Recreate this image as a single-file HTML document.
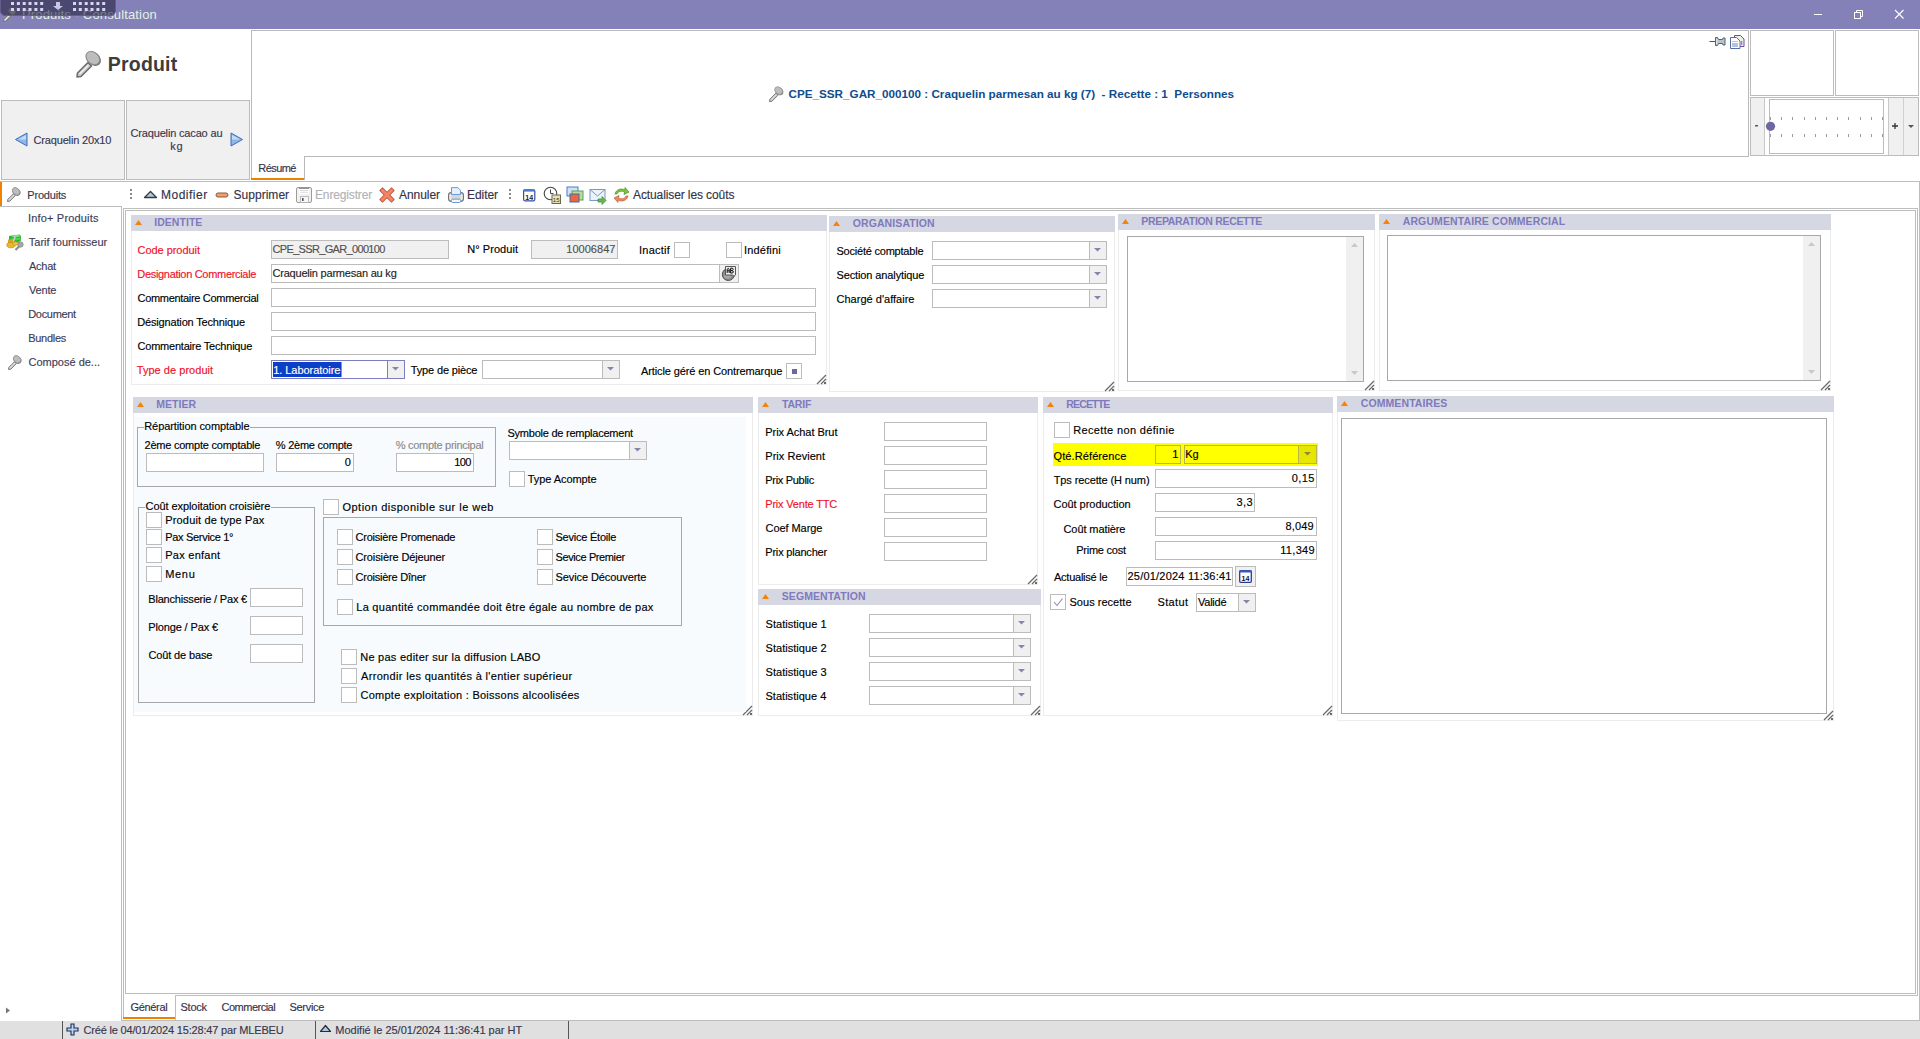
<!DOCTYPE html>
<html><head><meta charset="utf-8"><title>Produits - Consultation</title>
<style>
html,body{margin:0;padding:0;}
body{width:1920px;height:1039px;position:relative;overflow:hidden;background:#ffffff;font-family:'Liberation Sans', sans-serif;}
div{box-sizing:border-box;}
svg{position:absolute;overflow:visible;}
</style></head><body>
<div style="position:absolute;left:0px;top:0px;width:1920px;height:29px;background:#8480b8"></div>
<svg style="left:3px;top:7px" width="14" height="15" viewBox="0 0 14 15"><g transform="scale(0.5385)">
<path d="M1 27 L1.5 23 L12 12.5 L15.5 16 L5 26.5 Z" fill="#c8c8c8" stroke="#6e6e6e" stroke-width="1.6" stroke-linejoin="round"/>
<path d="M3.5 24 L12.5 15" stroke="#f2f2f2" stroke-width="1.2"/>
<ellipse cx="17.3" cy="8.6" rx="8.6" ry="6.4" transform="rotate(42 17.3 8.6)" fill="#7a7a7a"/>
<ellipse cx="16.8" cy="8.0" rx="7.6" ry="5.6" transform="rotate(42 16.8 8.0)" fill="#bdbdbd" stroke="#8a8a8a" stroke-width="0.8"/>
</g></svg>
<div style="position:absolute;left:22.00px;top:8.00px;white-space:pre;font-size:13px;line-height:13px;font-weight:400;color:#e0f2e0;letter-spacing:0.148px;">Produits - Consultation</div>
<div style="position:absolute;left:0px;top:-4px;width:116px;height:20px;background:rgba(16,14,42,0.5);border:1px solid #625e8c;border-radius:0 0 5px 5px"></div>
<svg style="left:0px;top:0px" width="116" height="15" viewBox="0 0 116 15"><rect x="11.0" y="2" width="3" height="3" fill="#d8d6ee"/><rect x="73.0" y="2" width="3" height="3" fill="#d8d6ee"/><rect x="11.0" y="8" width="3" height="3" fill="#d8d6ee"/><rect x="73.0" y="8" width="3" height="3" fill="#d8d6ee"/><rect x="16.9" y="2" width="3" height="3" fill="#d8d6ee"/><rect x="78.8" y="2" width="3" height="3" fill="#d8d6ee"/><rect x="16.9" y="8" width="3" height="3" fill="#d8d6ee"/><rect x="78.8" y="8" width="3" height="3" fill="#d8d6ee"/><rect x="22.7" y="2" width="3" height="3" fill="#d8d6ee"/><rect x="84.7" y="2" width="3" height="3" fill="#d8d6ee"/><rect x="22.7" y="8" width="3" height="3" fill="#d8d6ee"/><rect x="84.7" y="8" width="3" height="3" fill="#d8d6ee"/><rect x="28.5" y="2" width="3" height="3" fill="#d8d6ee"/><rect x="90.5" y="2" width="3" height="3" fill="#d8d6ee"/><rect x="28.5" y="8" width="3" height="3" fill="#d8d6ee"/><rect x="90.5" y="8" width="3" height="3" fill="#d8d6ee"/><rect x="34.4" y="2" width="3" height="3" fill="#d8d6ee"/><rect x="96.4" y="2" width="3" height="3" fill="#d8d6ee"/><rect x="34.4" y="8" width="3" height="3" fill="#d8d6ee"/><rect x="96.4" y="8" width="3" height="3" fill="#d8d6ee"/><rect x="40.2" y="2" width="3" height="3" fill="#d8d6ee"/><rect x="102.2" y="2" width="3" height="3" fill="#d8d6ee"/><rect x="40.2" y="8" width="3" height="3" fill="#d8d6ee"/><rect x="102.2" y="8" width="3" height="3" fill="#d8d6ee"/><path d="M56 2 h4 v4 h3 l-5 4 l-5 -4 h3 z" fill="#c8c6e6"/></svg>
<svg style="left:1800px;top:0px" width="120" height="29" viewBox="0 0 120 29"><line x1="14" y1="14.5" x2="22" y2="14.5" stroke="#fff" stroke-width="1"/>
<rect x="54.5" y="12.5" width="6" height="6" fill="none" stroke="#fff" stroke-width="1"/>
<path d="M56.5 12.5 v-2 h6 v6 h-2" fill="none" stroke="#fff" stroke-width="1"/>
<path d="M95 10 L103.5 18.5 M103.5 10 L95 18.5" stroke="#fff" stroke-width="1.1"/></svg>
<svg style="left:76px;top:50px" width="26" height="28" viewBox="0 0 26 28"><g transform="scale(1.0000)">
<path d="M1 27 L1.5 23 L12 12.5 L15.5 16 L5 26.5 Z" fill="#c8c8c8" stroke="#6e6e6e" stroke-width="1.6" stroke-linejoin="round"/>
<path d="M3.5 24 L12.5 15" stroke="#f2f2f2" stroke-width="1.2"/>
<ellipse cx="17.3" cy="8.6" rx="8.6" ry="6.4" transform="rotate(42 17.3 8.6)" fill="#7a7a7a"/>
<ellipse cx="16.8" cy="8.0" rx="7.6" ry="5.6" transform="rotate(42 16.8 8.0)" fill="#bdbdbd" stroke="#8a8a8a" stroke-width="0.8"/>
</g></svg>
<div style="position:absolute;left:107.75px;top:55.49px;white-space:pre;font-size:19.5px;line-height:19.5px;font-weight:700;color:#3d3d3d;letter-spacing:0.208px;">Produit</div>
<div style="position:absolute;left:1px;top:100px;width:124px;height:80px;box-sizing:border-box;border:1px solid #bcbcbc;background:#f0f0f0;"></div>
<div style="position:absolute;left:126px;top:100px;width:124px;height:80px;box-sizing:border-box;border:1px solid #bcbcbc;background:#f0f0f0;"></div>
<svg style="left:14px;top:132px" width="14" height="15" viewBox="0 0 14 15"><path d="M13 1 L1.5 7.5 L13 14 Z" fill="#8fb6e8" stroke="#3f6fb8" stroke-width="1"/><path d="M12 3 L4 7.5 L12 7.5 Z" fill="#c4dcf6"/></svg>
<div style="position:absolute;left:33.50px;top:134.69px;white-space:pre;-webkit-text-stroke:0.15px currentColor;font-size:11px;line-height:11px;font-weight:400;color:#37374f;letter-spacing:-0.161px;">Craquelin 20x10</div>
<div style="position:absolute;left:130.50px;top:127.69px;white-space:pre;-webkit-text-stroke:0.15px currentColor;font-size:11px;line-height:11px;font-weight:400;color:#37374f;letter-spacing:-0.162px;">Craquelin cacao au</div>
<div style="position:absolute;left:170.25px;top:140.69px;white-space:pre;-webkit-text-stroke:0.15px currentColor;font-size:11px;line-height:11px;font-weight:400;color:#37374f;letter-spacing:0.750px;">kg</div>
<svg style="left:230px;top:132px" width="14" height="15" viewBox="0 0 14 15"><path d="M1 1 L12.5 7.5 L1 14 Z" fill="#8fb6e8" stroke="#3f6fb8" stroke-width="1"/><path d="M2 3 L10 7.5 L2 7.5 Z" fill="#c4dcf6"/></svg>
<div style="position:absolute;left:251px;top:30px;width:1px;height:150px;background:#b9b9b9"></div>
<div style="position:absolute;left:251px;top:30px;width:1498px;height:1px;background:#b9b9b9"></div>
<div style="position:absolute;left:1748px;top:30px;width:1px;height:127px;background:#b9b9b9"></div>
<div style="position:absolute;left:304px;top:156px;width:1445px;height:1px;background:#b9b9b9"></div>
<svg style="left:769px;top:86px" width="15" height="16" viewBox="0 0 15 16"><g transform="scale(0.5769)">
<path d="M1 27 L1.5 23 L12 12.5 L15.5 16 L5 26.5 Z" fill="#c8c8c8" stroke="#6e6e6e" stroke-width="1.6" stroke-linejoin="round"/>
<path d="M3.5 24 L12.5 15" stroke="#f2f2f2" stroke-width="1.2"/>
<ellipse cx="17.3" cy="8.6" rx="8.6" ry="6.4" transform="rotate(42 17.3 8.6)" fill="#7a7a7a"/>
<ellipse cx="16.8" cy="8.0" rx="7.6" ry="5.6" transform="rotate(42 16.8 8.0)" fill="#bdbdbd" stroke="#8a8a8a" stroke-width="0.8"/>
</g></svg>
<div style="position:absolute;left:788.50px;top:88.10px;white-space:pre;font-size:11.7px;line-height:11.7px;font-weight:700;color:#0f4d8f;">CPE_SSR_GAR_000100 : Craquelin parmesan au kg (7)  - Recette : 1  Personnes</div>
<svg style="left:1705px;top:30px" width="45" height="25" viewBox="0 0 45 25"><line x1="4.5" y1="11.5" x2="10.5" y2="11.5" stroke="#4a5662" stroke-width="1"/>
<path d="M10.5 7.5 L12.5 7.5 L13.5 9.5 L17.5 9.5 L18 8 L20 8 L20 15 L18 15 L17.5 13.5 L13.5 13.5 L12.5 15.5 L10.5 15.5 Z" fill="#b8c4cc" stroke="#56626e" stroke-width="1" stroke-linejoin="round"/>
<rect x="11.3" y="9" width="1" height="5" fill="#e8eef2"/>
<path d="M29.5 5.5 h6 l3.5 3.5 v7.5 h-9.5 z" fill="#eef0e6" stroke="#7446ac" stroke-width="1"/>
<rect x="36" y="11" width="1.3" height="4" fill="#a080c8"/>
<path d="M25.5 7.5 h6 l3.5 3.5 v7.5 h-9.5 z" fill="#fbfdff" stroke="#5a6ea6" stroke-width="1"/>
<line x1="27" y1="11.5" x2="33" y2="11.5" stroke="#a8b8dc" stroke-width="0.8"/>
<rect x="27" y="13" width="6" height="4" fill="#b4c2e2"/></svg>
<div style="position:absolute;left:1750px;top:30px;width:84px;height:66px;box-sizing:border-box;border:1px solid #bcbcbc;background:#fff;"></div>
<div style="position:absolute;left:1835px;top:30px;width:84px;height:66px;box-sizing:border-box;border:1px solid #bcbcbc;background:#fff;"></div>
<div style="position:absolute;left:1750px;top:97px;width:169px;height:59px;box-sizing:border-box;border:1px solid #bcbcbc;background:#f0f0f0;"></div>
<div style="position:absolute;left:1765px;top:98px;width:123px;height:57px;background:#fff"></div>
<div style="position:absolute;left:1764px;top:98px;width:1px;height:57px;background:#c8c8c8"></div>
<div style="position:absolute;left:1888px;top:98px;width:1px;height:57px;background:#c8c8c8"></div>
<div style="position:absolute;left:1903px;top:98px;width:1px;height:57px;background:#d0d0d0"></div>
<div style="position:absolute;left:1769px;top:99px;width:115px;height:55px;box-sizing:border-box;border:1px solid #bcbcbc;background:#fff;"></div>
<svg style="left:1770px;top:117px" width="115" height="21" viewBox="0 0 115 21"><rect x="0.0" y="0" width="1" height="3" fill="#9a9a9a"/><rect x="0.0" y="17" width="1" height="3" fill="#9a9a9a"/><rect x="11.0" y="0" width="1" height="3" fill="#9a9a9a"/><rect x="11.0" y="17" width="1" height="3" fill="#9a9a9a"/><rect x="22.0" y="0" width="1" height="3" fill="#9a9a9a"/><rect x="22.0" y="17" width="1" height="3" fill="#9a9a9a"/><rect x="34.0" y="0" width="1" height="3" fill="#9a9a9a"/><rect x="34.0" y="17" width="1" height="3" fill="#9a9a9a"/><rect x="45.0" y="0" width="1" height="3" fill="#9a9a9a"/><rect x="45.0" y="17" width="1" height="3" fill="#9a9a9a"/><rect x="56.0" y="0" width="1" height="3" fill="#9a9a9a"/><rect x="56.0" y="17" width="1" height="3" fill="#9a9a9a"/><rect x="67.0" y="0" width="1" height="3" fill="#9a9a9a"/><rect x="67.0" y="17" width="1" height="3" fill="#9a9a9a"/><rect x="78.0" y="0" width="1" height="3" fill="#9a9a9a"/><rect x="78.0" y="17" width="1" height="3" fill="#9a9a9a"/><rect x="90.0" y="0" width="1" height="3" fill="#9a9a9a"/><rect x="90.0" y="17" width="1" height="3" fill="#9a9a9a"/><rect x="101.0" y="0" width="1" height="3" fill="#9a9a9a"/><rect x="101.0" y="17" width="1" height="3" fill="#9a9a9a"/><rect x="112.0" y="0" width="1" height="3" fill="#9a9a9a"/><rect x="112.0" y="17" width="1" height="3" fill="#9a9a9a"/></svg>
<svg style="left:1750px;top:116px" width="170" height="20" viewBox="0 0 170 20"><circle cx="20.5" cy="10.3" r="4.6" fill="#6c68a2"/>
<rect x="5" y="9.2" width="3" height="1.2" fill="#333"/>
<path d="M142 10 h6 M145 7 v6" stroke="#333" stroke-width="1.3"/>
<path d="M158 9 h6 l-3 3 z" fill="#555"/></svg>
<div style="position:absolute;left:251px;top:178px;width:54px;height:2px;background:#f08000"></div>
<div style="position:absolute;left:304px;top:156px;width:1px;height:24px;background:#b9b9b9"></div>
<div style="position:absolute;left:258.25px;top:162.69px;white-space:pre;-webkit-text-stroke:0.15px currentColor;font-size:11px;line-height:11px;font-weight:400;color:#33334a;letter-spacing:-0.550px;">Résumé</div>
<div style="position:absolute;left:0px;top:181px;width:1920px;height:1px;background:#bdbdbd"></div>
<div style="position:absolute;left:0px;top:182px;width:2px;height:24px;background:#f08000"></div>
<svg style="left:7px;top:187px" width="14" height="15" viewBox="0 0 14 15"><g transform="scale(0.5385)">
<path d="M1 27 L1.5 23 L12 12.5 L15.5 16 L5 26.5 Z" fill="#c8c8c8" stroke="#6e6e6e" stroke-width="1.6" stroke-linejoin="round"/>
<path d="M3.5 24 L12.5 15" stroke="#f2f2f2" stroke-width="1.2"/>
<ellipse cx="17.3" cy="8.6" rx="8.6" ry="6.4" transform="rotate(42 17.3 8.6)" fill="#7a7a7a"/>
<ellipse cx="16.8" cy="8.0" rx="7.6" ry="5.6" transform="rotate(42 16.8 8.0)" fill="#bdbdbd" stroke="#8a8a8a" stroke-width="0.8"/>
</g></svg>
<div style="position:absolute;left:27.25px;top:189.69px;white-space:pre;-webkit-text-stroke:0.15px currentColor;font-size:11px;line-height:11px;font-weight:400;color:#37374f;letter-spacing:-0.179px;">Produits</div>
<svg style="left:130px;top:189px" width="3" height="11" viewBox="0 0 3 11"><rect x="0" y="0" width="2" height="2" fill="#8a8a8a"/><rect x="0" y="4" width="2" height="2" fill="#8a8a8a"/><rect x="0" y="8" width="2" height="2" fill="#8a8a8a"/></svg>
<svg style="left:143px;top:190px" width="15" height="9" viewBox="0 0 15 9"><path d="M1.5 7.5 L7.5 1.5 L13.5 7.5 Z" fill="#a9cbe6" stroke="#3a3a3a" stroke-width="1.3" stroke-linejoin="round"/></svg>
<div style="position:absolute;left:161.00px;top:188.84px;white-space:pre;-webkit-text-stroke:0.15px currentColor;font-size:12px;line-height:12px;font-weight:400;color:#33334a;letter-spacing:0.500px;">Modifier</div>
<svg style="left:215px;top:191px" width="15" height="8" viewBox="0 0 15 8"><rect x="1" y="2" width="12" height="4" rx="2" fill="#f0a070" stroke="#8a5a3a" stroke-width="1"/></svg>
<div style="position:absolute;left:233.50px;top:188.84px;white-space:pre;-webkit-text-stroke:0.15px currentColor;font-size:12px;line-height:12px;font-weight:400;color:#33334a;letter-spacing:0.031px;">Supprimer</div>
<svg style="left:296px;top:187px" width="16" height="16" viewBox="0 0 16 16"><rect x="0.5" y="0.5" width="15" height="15" rx="1.5" fill="#f2f2f2" stroke="#9c9c9c" stroke-width="1"/>
<rect x="3" y="1" width="10" height="6" fill="#fff"/><rect x="3" y="0.8" width="10" height="1" fill="#7a7a7a"/>
<line x1="4" y1="3.5" x2="12" y2="3.5" stroke="#d4d4d4" stroke-width="0.8"/><line x1="4" y1="5.3" x2="12" y2="5.3" stroke="#d4d4d4" stroke-width="0.8"/>
<rect x="4.5" y="9.5" width="8" height="6" fill="#f6f6f6" stroke="#b0b0b0" stroke-width="0.8"/><rect x="6" y="11" width="1.6" height="3" fill="#555"/></svg>
<div style="position:absolute;left:315.00px;top:188.84px;white-space:pre;-webkit-text-stroke:0.15px currentColor;font-size:12px;line-height:12px;font-weight:400;color:#b2b2b8;letter-spacing:-0.150px;">Enregistrer</div>
<svg style="left:380px;top:188px" width="14" height="14" viewBox="0 0 14 14"><g transform="rotate(45 7 7)"><rect x="-1.8" y="4.6" width="17.6" height="4.8" rx="0.8" fill="#c44a36"/><rect x="4.6" y="-1.8" width="4.8" height="17.6" rx="0.8" fill="#c44a36"/><rect x="-0.9" y="5.5" width="15.8" height="3" fill="#f08666"/><rect x="5.5" y="-0.9" width="3" height="15.8" fill="#f08666"/></g></svg>
<div style="position:absolute;left:399.00px;top:188.84px;white-space:pre;-webkit-text-stroke:0.15px currentColor;font-size:12px;line-height:12px;font-weight:400;color:#33334a;letter-spacing:-0.042px;">Annuler</div>
<svg style="left:448px;top:187px" width="16" height="16" viewBox="0 0 16 16"><rect x="0.6" y="5.6" width="14.8" height="8.8" rx="2.6" fill="#eeeeee" stroke="#6e6e6e" stroke-width="1.1"/>
<rect x="3.2" y="7.8" width="9.6" height="4.2" fill="#d6d6d6"/><line x1="3" y1="7.2" x2="13" y2="7.2" stroke="#7a7a7a" stroke-width="0.9"/>
<path d="M3.5 0.6 h6.3 l2.7 2.7 v4.2 h-9 z" fill="#e6f0fb" stroke="#6c9ad6" stroke-width="1"/>
<rect x="3.5" y="12.2" width="9" height="3.3" rx="1" fill="#f4f7fb" stroke="#6c9ad6" stroke-width="1"/></svg>
<div style="position:absolute;left:467.00px;top:188.84px;white-space:pre;-webkit-text-stroke:0.15px currentColor;font-size:12px;line-height:12px;font-weight:400;color:#33334a;letter-spacing:-0.050px;">Editer</div>
<svg style="left:509px;top:189px" width="3" height="11" viewBox="0 0 3 11"><rect x="0" y="0" width="2" height="2" fill="#8a8a8a"/><rect x="0" y="4" width="2" height="2" fill="#8a8a8a"/><rect x="0" y="8" width="2" height="2" fill="#8a8a8a"/></svg>
<svg style="left:523px;top:189px" width="13" height="13" viewBox="0 0 13 13"><rect x="0.6" y="0.8" width="11.2" height="11" rx="1.2" fill="#fff" stroke="#3a4aa8" stroke-width="1.2"/><rect x="0.6" y="0.6" width="11.2" height="2" fill="#4a7ad0"/><text x="6.2" y="10.6" font-size="7" font-family="Liberation Sans" font-weight="700" text-anchor="middle" fill="#222">14</text></svg>
<svg style="left:543px;top:186px" width="19" height="19" viewBox="0 0 19 19"><circle cx="7.5" cy="7.5" r="6.3" fill="#fff" stroke="#444" stroke-width="1.1"/><path d="M7.5 3.5 v4 h3" stroke="#444" stroke-width="1" fill="none"/><rect x="9" y="9" width="8.5" height="8.5" fill="#e6e2b8" stroke="#6a6a4a" stroke-width="1"/><text x="13.2" y="16.2" font-size="6" font-family="Liberation Sans" text-anchor="middle" fill="#333">15</text></svg>
<svg style="left:566px;top:186px" width="18" height="17" viewBox="0 0 18 17"><rect x="1" y="1" width="11" height="9" fill="#cfe2f6" stroke="#4a7ec8" stroke-width="1"/><rect x="6" y="5" width="11" height="9" fill="#b8dc9c" stroke="#5aa05a" stroke-width="1"/><rect x="4" y="8" width="9" height="8" fill="#f0663a" stroke="#3a6ab8" stroke-width="1"/></svg>
<svg style="left:589px;top:188px" width="18" height="16" viewBox="0 0 18 16"><rect x="1" y="1.5" width="15" height="11" fill="#eaf2fb" stroke="#7a9ac0" stroke-width="1"/><path d="M1 1.5 L8.5 8 L16 1.5" stroke="#7a9ac0" fill="none" stroke-width="1"/><path d="M9 11 h4 v-2.5 l4 4 l-4 4 v-2.5 h-4 z" fill="#6ab84a" stroke="#3a883a" stroke-width="0.7"/></svg>
<svg style="left:613px;top:186px" width="17" height="18" viewBox="0 0 17 18"><path d="M2 8 C3 3 9 2 12 4 L12 1.5 L16 6 L11 8.5 L11.5 6 C9 4.5 5 5 4 8 Z" fill="#7cc83a" stroke="#4a8a2a" stroke-width="0.7"/><path d="M15 10 C14 15 8 16 5 14 L5 16.5 L1 12 L6 9.5 L5.5 12 C8 13.5 12 13 13 10 Z" fill="#ef8a62" stroke="#b85a3a" stroke-width="0.7"/></svg>
<div style="position:absolute;left:633.00px;top:188.84px;white-space:pre;-webkit-text-stroke:0.15px currentColor;font-size:12px;line-height:12px;font-weight:400;color:#33334a;letter-spacing:-0.105px;">Actualiser les coûts</div>
<div style="position:absolute;left:0px;top:206px;width:122px;height:1px;background:#bdbdbd"></div>
<div style="position:absolute;left:121px;top:206px;width:1px;height:815px;background:#bdbdbd"></div>
<div style="position:absolute;left:28.00px;top:212.69px;white-space:pre;-webkit-text-stroke:0.15px currentColor;font-size:11px;line-height:11px;font-weight:400;color:#3c3c58;letter-spacing:0.173px;">Info+ Produits</div>
<svg style="left:6px;top:234px" width="18" height="17" viewBox="0 0 18 17"><path d="M3 2 L13.5 0.5 L15 2 L15 6.5 L11 9.5 L3 9 Z" fill="#2fb82f"/><path d="M4 1.5 L13 1 L14.5 2.5 L8 3.5 Z" fill="#7ee87e"/><path d="M5 4.5 L14.5 4 L14.5 5.5 L6 6 Z" fill="#62d862"/><path d="M8.5 2.5 L10 2.5 L8 8 L6.5 8 Z" fill="#d8c8e8"/><path d="M2 5.5 h5 v5 h-5 z" fill="#d8a820"/><ellipse cx="5" cy="11" rx="4.2" ry="2.8" fill="#e8b828" stroke="#b08010" stroke-width="0.6"/><ellipse cx="9.5" cy="9.5" rx="3" ry="1.8" fill="#f0c040" stroke="#b88a10" stroke-width="0.5"/><line x1="9.5" y1="16" x2="14" y2="11.5" stroke="#8a8a8a" stroke-width="2.2"/><circle cx="14.5" cy="10.5" r="2.7" fill="#a8a8a8" stroke="#7a7a7a" stroke-width="0.6"/></svg>
<div style="position:absolute;left:28.75px;top:236.69px;white-space:pre;-webkit-text-stroke:0.15px currentColor;font-size:11px;line-height:11px;font-weight:400;color:#3c3c58;letter-spacing:0.016px;">Tarif fournisseur</div>
<div style="position:absolute;left:29.00px;top:260.69px;white-space:pre;-webkit-text-stroke:0.15px currentColor;font-size:11px;line-height:11px;font-weight:400;color:#3c3c58;letter-spacing:-0.250px;">Achat</div>
<div style="position:absolute;left:29.00px;top:284.69px;white-space:pre;-webkit-text-stroke:0.15px currentColor;font-size:11px;line-height:11px;font-weight:400;color:#3c3c58;letter-spacing:-0.188px;">Vente</div>
<div style="position:absolute;left:28.25px;top:308.69px;white-space:pre;-webkit-text-stroke:0.15px currentColor;font-size:11px;line-height:11px;font-weight:400;color:#3c3c58;letter-spacing:-0.321px;">Document</div>
<div style="position:absolute;left:28.25px;top:332.69px;white-space:pre;-webkit-text-stroke:0.15px currentColor;font-size:11px;line-height:11px;font-weight:400;color:#3c3c58;letter-spacing:-0.292px;">Bundles</div>
<svg style="left:8px;top:355px" width="14" height="15" viewBox="0 0 14 15"><g transform="scale(0.5385)">
<path d="M1 27 L1.5 23 L12 12.5 L15.5 16 L5 26.5 Z" fill="#c8c8c8" stroke="#6e6e6e" stroke-width="1.6" stroke-linejoin="round"/>
<path d="M3.5 24 L12.5 15" stroke="#f2f2f2" stroke-width="1.2"/>
<ellipse cx="17.3" cy="8.6" rx="8.6" ry="6.4" transform="rotate(42 17.3 8.6)" fill="#7a7a7a"/>
<ellipse cx="16.8" cy="8.0" rx="7.6" ry="5.6" transform="rotate(42 16.8 8.0)" fill="#bdbdbd" stroke="#8a8a8a" stroke-width="0.8"/>
</g></svg>
<div style="position:absolute;left:28.50px;top:356.69px;white-space:pre;-webkit-text-stroke:0.15px currentColor;font-size:11px;line-height:11px;font-weight:400;color:#3c3c58;">Composé de...</div>
<svg style="left:5px;top:1007px" width="6" height="7" viewBox="0 0 6 7"><path d="M1 0.5 L5 3.5 L1 6.5 Z" fill="#777"/></svg>
<div style="position:absolute;left:123px;top:208px;width:1px;height:811px;background:#bdbdbd"></div>
<div style="position:absolute;left:123px;top:208px;width:1795px;height:1px;background:#bdbdbd"></div>
<div style="position:absolute;left:1917px;top:208px;width:1px;height:788px;background:#bdbdbd"></div>
<div style="position:absolute;left:175px;top:995px;width:1743px;height:1px;background:#bdbdbd"></div>
<div style="position:absolute;left:125px;top:210px;width:1791px;height:784px;box-sizing:border-box;border:1px solid #bdbdbd;background:#fff;"></div>
<div style="position:absolute;left:123px;top:1017px;width:53px;height:2px;background:#f08000"></div>
<div style="position:absolute;left:175px;top:995px;width:1px;height:25px;background:#bdbdbd"></div>
<div style="position:absolute;left:130.50px;top:1001.69px;white-space:pre;-webkit-text-stroke:0.15px currentColor;font-size:11px;line-height:11px;font-weight:400;color:#33334a;letter-spacing:-0.333px;">Général</div>
<div style="position:absolute;left:180.50px;top:1001.69px;white-space:pre;-webkit-text-stroke:0.15px currentColor;font-size:11px;line-height:11px;font-weight:400;color:#33334a;letter-spacing:-0.250px;">Stock</div>
<div style="position:absolute;left:221.50px;top:1001.69px;white-space:pre;-webkit-text-stroke:0.15px currentColor;font-size:11px;line-height:11px;font-weight:400;color:#33334a;letter-spacing:-0.500px;">Commercial</div>
<div style="position:absolute;left:289.50px;top:1001.69px;white-space:pre;-webkit-text-stroke:0.15px currentColor;font-size:11px;line-height:11px;font-weight:400;color:#33334a;letter-spacing:-0.292px;">Service</div>
<div style="position:absolute;left:121px;top:1020px;width:1799px;height:1px;background:#bdbdbd"></div>
<div style="position:absolute;left:1919px;top:181px;width:1px;height:840px;background:#bdbdbd"></div>
<div style="position:absolute;left:0px;top:1021px;width:1920px;height:18px;background:#e0e0e0"></div>
<div style="position:absolute;left:62px;top:1021px;width:1px;height:18px;background:#555"></div>
<div style="position:absolute;left:315px;top:1021px;width:1px;height:18px;background:#555"></div>
<div style="position:absolute;left:568px;top:1021px;width:1px;height:18px;background:#555"></div>
<svg style="left:66px;top:1023px" width="14" height="14" viewBox="0 0 14 14"><path d="M5 1 h3 v4 h4 v3 h-4 v4 h-3 v-4 h-4 v-3 h4 z" fill="#b8d4ee" stroke="#1a2a5a" stroke-width="1.1"/></svg>
<div style="position:absolute;left:83.50px;top:1024.69px;white-space:pre;-webkit-text-stroke:0.15px currentColor;font-size:11px;line-height:11px;font-weight:400;color:#37374f;letter-spacing:-0.176px;">Créé le 04/01/2024 15:28:47 par MLEBEU</div>
<svg style="left:319px;top:1024px" width="14" height="9" viewBox="0 0 14 9"><path d="M1.5 7.5 L6.5 1.5 L11.5 7.5 Z" fill="#a9cbe6" stroke="#2a2a3a" stroke-width="1.2" stroke-linejoin="round"/></svg>
<div style="position:absolute;left:335.25px;top:1024.69px;white-space:pre;-webkit-text-stroke:0.15px currentColor;font-size:11px;line-height:11px;font-weight:400;color:#37374f;">Modifié le 25/01/2024 11:36:41 par HT</div>
<div style="position:absolute;left:131px;top:215px;width:696px;height:16px;background:#d5d8e2"></div>
<svg style="left:135px;top:220px" width="8" height="6" viewBox="0 0 8 6"><path d="M0 5 L3.5 0 L7 5 Z" fill="#f5820a"/></svg>
<div style="position:absolute;left:154.25px;top:217.11px;white-space:pre;font-size:10.5px;line-height:10.5px;font-weight:700;color:#8079bd;letter-spacing:0.036px;">IDENTITE</div>
<div style="position:absolute;left:131px;top:231px;width:696px;height:154px;border:1px solid #ececec;border-top:none;background:#fff"></div>
<svg style="left:816px;top:374px" width="11" height="11" viewBox="0 0 11 11"><path d="M1 10 L10 1 M5 10 L10 5" stroke="#6a6a6a" stroke-width="1.3"/><rect x="8" y="8" width="2" height="2" fill="#6a6a6a"/></svg>
<div style="position:absolute;left:137.50px;top:244.69px;white-space:pre;-webkit-text-stroke:0.15px currentColor;font-size:11px;line-height:11px;font-weight:400;color:#f0102a;letter-spacing:-0.045px;">Code produit</div>
<div style="position:absolute;left:137.25px;top:268.69px;white-space:pre;-webkit-text-stroke:0.15px currentColor;font-size:11px;line-height:11px;font-weight:400;color:#f0102a;letter-spacing:-0.307px;">Designation Commerciale</div>
<div style="position:absolute;left:137.50px;top:292.69px;white-space:pre;-webkit-text-stroke:0.15px currentColor;font-size:11px;line-height:11px;font-weight:400;color:#000000;letter-spacing:-0.310px;">Commentaire Commercial</div>
<div style="position:absolute;left:137.25px;top:316.69px;white-space:pre;-webkit-text-stroke:0.15px currentColor;font-size:11px;line-height:11px;font-weight:400;color:#000000;letter-spacing:-0.163px;">Désignation Technique</div>
<div style="position:absolute;left:137.50px;top:340.69px;white-space:pre;-webkit-text-stroke:0.15px currentColor;font-size:11px;line-height:11px;font-weight:400;color:#000000;letter-spacing:-0.212px;">Commentaire Technique</div>
<div style="position:absolute;left:136.75px;top:364.69px;white-space:pre;-webkit-text-stroke:0.15px currentColor;font-size:11px;line-height:11px;font-weight:400;color:#f0102a;letter-spacing:0.036px;">Type de produit</div>
<div style="position:absolute;left:271px;top:240px;width:178px;height:19px;box-sizing:border-box;border:1px solid #bcbcbc;background:#f0f0f0;"></div>
<div style="position:absolute;left:272.50px;top:243.69px;white-space:pre;-webkit-text-stroke:0.15px currentColor;font-size:11px;line-height:11px;font-weight:400;color:#505050;letter-spacing:-0.662px;">CPE_SSR_GAR_000100</div>
<div style="position:absolute;left:467.25px;top:243.69px;white-space:pre;-webkit-text-stroke:0.15px currentColor;font-size:11px;line-height:11px;font-weight:400;color:#000000;letter-spacing:0.056px;">N° Produit</div>
<div style="position:absolute;left:531px;top:240px;width:87px;height:19px;box-sizing:border-box;border:1px solid #bcbcbc;background:#f0f0f0;"></div>
<div style="position:absolute;left:566.25px;top:243.69px;white-space:pre;-webkit-text-stroke:0.15px currentColor;font-size:11px;line-height:11px;font-weight:400;color:#505050;letter-spacing:0.036px;">10006847</div>
<div style="position:absolute;left:639.00px;top:244.69px;white-space:pre;-webkit-text-stroke:0.15px currentColor;font-size:11px;line-height:11px;font-weight:400;color:#000000;letter-spacing:0.250px;">Inactif</div>
<div style="position:absolute;left:674px;top:242px;width:16px;height:16px;box-sizing:border-box;border:1px solid #bcbcbc;background:#fff;"></div>
<div style="position:absolute;left:726px;top:242px;width:16px;height:16px;box-sizing:border-box;border:1px solid #bcbcbc;background:#fff;"></div>
<div style="position:absolute;left:744.00px;top:244.69px;white-space:pre;-webkit-text-stroke:0.15px currentColor;font-size:11px;line-height:11px;font-weight:400;color:#000000;letter-spacing:0.179px;">Indéfini</div>
<div style="position:absolute;left:271px;top:264px;width:468px;height:19px;box-sizing:border-box;border:1px solid #bcbcbc;background:#fff;"></div>
<div style="position:absolute;left:272.50px;top:267.69px;white-space:pre;-webkit-text-stroke:0.15px currentColor;font-size:11px;line-height:11px;font-weight:400;color:#1e1e1e;letter-spacing:-0.207px;">Craquelin parmesan au kg</div>
<div style="position:absolute;left:720px;top:265px;width:18px;height:17px;background:#f0f0f0"></div>
<div style="position:absolute;left:719px;top:265px;width:1px;height:17px;background:#bcbcbc"></div>
<svg style="left:719px;top:264px" width="20" height="20" viewBox="0 0 20 20"><circle cx="9.3" cy="10.5" r="6" fill="#8c8c8c" stroke="#4e4e4e" stroke-width="1"/><ellipse cx="8.5" cy="12.5" rx="3.5" ry="2" fill="#a8a8a8"/><path d="M6.5 2.5 h10 v8.5 l-1.5 1.2 l-1.5 -1.2 h-7 z" fill="#efefef" stroke="#555" stroke-width="1"/><path d="M8.2 9 V5.2 Q9.2 3.6 10.2 5.2 V9 M8.2 6.8 H10.2 M11.6 9 V4.2 H13 Q14.3 4.3 14.2 5.6 Q14 6.5 12 6.6 H13 Q14.5 6.8 14.4 8 Q14.2 9 13 9 Z" fill="none" stroke="#111" stroke-width="1"/></svg>
<div style="position:absolute;left:271px;top:288px;width:545px;height:19px;box-sizing:border-box;border:1px solid #bcbcbc;background:#fff;"></div>
<div style="position:absolute;left:271px;top:312px;width:545px;height:19px;box-sizing:border-box;border:1px solid #bcbcbc;background:#fff;"></div>
<div style="position:absolute;left:271px;top:336px;width:545px;height:19px;box-sizing:border-box;border:1px solid #bcbcbc;background:#fff;"></div>
<div style="position:absolute;left:271px;top:360px;width:134px;height:19px;box-sizing:border-box;border:1px solid #7d7dc0;background:#fff;"></div>
<div style="position:absolute;left:388px;top:361px;width:16px;height:17px;background:#f0f0f0"></div>
<div style="position:absolute;left:387px;top:361px;width:1px;height:17px;background:#7d7dc0"></div>
<svg style="left:392.0px;top:367.0px" width="7" height="4" viewBox="0 0 7 4"><path d="M0 0 L7 0 L3.5 3.5 Z" fill="#8484ac"/></svg>
<div style="position:absolute;left:273px;top:362px;width:68px;height:15px;background:#0c3fc8"></div>
<div style="position:absolute;left:273.25px;top:364.69px;white-space:pre;-webkit-text-stroke:0.15px currentColor;font-size:11px;line-height:11px;font-weight:400;color:#ffffff;letter-spacing:-0.058px;">1. Laboratoire</div>
<div style="position:absolute;left:341px;top:362px;width:1px;height:15px;background:#f08000"></div>
<div style="position:absolute;left:410.75px;top:364.69px;white-space:pre;-webkit-text-stroke:0.15px currentColor;font-size:11px;line-height:11px;font-weight:400;color:#000000;letter-spacing:-0.146px;">Type de pièce</div>
<div style="position:absolute;left:482px;top:360px;width:138px;height:19px;box-sizing:border-box;border:1px solid #bcbcbc;background:#fff;"></div>
<div style="position:absolute;left:603px;top:361px;width:16px;height:17px;background:#f0f0f0"></div>
<div style="position:absolute;left:602px;top:361px;width:1px;height:17px;background:#bcbcbc"></div>
<svg style="left:607.0px;top:367.0px" width="7" height="4" viewBox="0 0 7 4"><path d="M0 0 L7 0 L3.5 3.5 Z" fill="#8484ac"/></svg>
<div style="position:absolute;left:641.00px;top:365.69px;white-space:pre;-webkit-text-stroke:0.15px currentColor;font-size:11px;line-height:11px;font-weight:400;color:#000000;letter-spacing:-0.111px;">Article géré en Contremarque</div>
<div style="position:absolute;left:786px;top:363px;width:16px;height:16px;box-sizing:border-box;border:1px solid #bcbcbc;background:#fff;"></div>
<div style="position:absolute;left:792px;top:369px;width:5px;height:5px;background:#6a6aa0"></div>
<div style="position:absolute;left:829px;top:216px;width:286px;height:16px;background:#d5d8e2"></div>
<svg style="left:833px;top:221px" width="8" height="6" viewBox="0 0 8 6"><path d="M0 5 L3.5 0 L7 5 Z" fill="#f5820a"/></svg>
<div style="position:absolute;left:852.75px;top:218.11px;white-space:pre;font-size:10.5px;line-height:10.5px;font-weight:700;color:#8079bd;letter-spacing:0.091px;">ORGANISATION</div>
<div style="position:absolute;left:829px;top:232px;width:286px;height:160px;border:1px solid #ececec;border-top:none;background:#fff"></div>
<svg style="left:1104px;top:381px" width="11" height="11" viewBox="0 0 11 11"><path d="M1 10 L10 1 M5 10 L10 5" stroke="#6a6a6a" stroke-width="1.3"/><rect x="8" y="8" width="2" height="2" fill="#6a6a6a"/></svg>
<div style="position:absolute;left:836.50px;top:245.69px;white-space:pre;-webkit-text-stroke:0.15px currentColor;font-size:11px;line-height:11px;font-weight:400;color:#000000;letter-spacing:-0.219px;">Société comptable</div>
<div style="position:absolute;left:836.50px;top:269.69px;white-space:pre;-webkit-text-stroke:0.15px currentColor;font-size:11px;line-height:11px;font-weight:400;color:#000000;letter-spacing:-0.118px;">Section analytique</div>
<div style="position:absolute;left:836.50px;top:293.69px;white-space:pre;-webkit-text-stroke:0.15px currentColor;font-size:11px;line-height:11px;font-weight:400;color:#000000;letter-spacing:0.017px;">Chargé d'affaire</div>
<div style="position:absolute;left:932px;top:241px;width:175px;height:19px;box-sizing:border-box;border:1px solid #bcbcbc;background:#fff;"></div>
<div style="position:absolute;left:1090px;top:242px;width:16px;height:17px;background:#f0f0f0"></div>
<div style="position:absolute;left:1089px;top:242px;width:1px;height:17px;background:#bcbcbc"></div>
<svg style="left:1094.0px;top:248.0px" width="7" height="4" viewBox="0 0 7 4"><path d="M0 0 L7 0 L3.5 3.5 Z" fill="#8484ac"/></svg>
<div style="position:absolute;left:932px;top:265px;width:175px;height:19px;box-sizing:border-box;border:1px solid #bcbcbc;background:#fff;"></div>
<div style="position:absolute;left:1090px;top:266px;width:16px;height:17px;background:#f0f0f0"></div>
<div style="position:absolute;left:1089px;top:266px;width:1px;height:17px;background:#bcbcbc"></div>
<svg style="left:1094.0px;top:272.0px" width="7" height="4" viewBox="0 0 7 4"><path d="M0 0 L7 0 L3.5 3.5 Z" fill="#8484ac"/></svg>
<div style="position:absolute;left:932px;top:289px;width:175px;height:19px;box-sizing:border-box;border:1px solid #bcbcbc;background:#fff;"></div>
<div style="position:absolute;left:1090px;top:290px;width:16px;height:17px;background:#f0f0f0"></div>
<div style="position:absolute;left:1089px;top:290px;width:1px;height:17px;background:#bcbcbc"></div>
<svg style="left:1094.0px;top:296.0px" width="7" height="4" viewBox="0 0 7 4"><path d="M0 0 L7 0 L3.5 3.5 Z" fill="#8484ac"/></svg>
<div style="position:absolute;left:1118px;top:214px;width:257px;height:16px;background:#d5d8e2"></div>
<svg style="left:1122px;top:219px" width="8" height="6" viewBox="0 0 8 6"><path d="M0 5 L3.5 0 L7 5 Z" fill="#f5820a"/></svg>
<div style="position:absolute;left:1141.25px;top:216.11px;white-space:pre;font-size:10.5px;line-height:10.5px;font-weight:700;color:#8079bd;letter-spacing:-0.319px;">PREPARATION RECETTE</div>
<div style="position:absolute;left:1118px;top:230px;width:257px;height:161px;border:1px solid #ececec;border-top:none;background:#fff"></div>
<svg style="left:1364px;top:380px" width="11" height="11" viewBox="0 0 11 11"><path d="M1 10 L10 1 M5 10 L10 5" stroke="#6a6a6a" stroke-width="1.3"/><rect x="8" y="8" width="2" height="2" fill="#6a6a6a"/></svg>
<div style="position:absolute;left:1127px;top:236px;width:237px;height:146px;box-sizing:border-box;border:1px solid #a8a8a8;background:#fff;"></div>
<div style="position:absolute;left:1346px;top:237px;width:17px;height:144px;background:#f0f0f0"></div>
<svg style="left:1351px;top:243px" width="7" height="5" viewBox="0 0 7 5"><path d="M0 4 L3.5 0 L7 4 Z" fill="#c8c8c8"/></svg>
<svg style="left:1351px;top:371px" width="7" height="5" viewBox="0 0 7 5"><path d="M0 0 L7 0 L3.5 4 Z" fill="#c8c8c8"/></svg>
<div style="position:absolute;left:1379px;top:214px;width:452px;height:16px;background:#d5d8e2"></div>
<svg style="left:1383px;top:219px" width="8" height="6" viewBox="0 0 8 6"><path d="M0 5 L3.5 0 L7 5 Z" fill="#f5820a"/></svg>
<div style="position:absolute;left:1402.75px;top:216.11px;white-space:pre;font-size:10.5px;line-height:10.5px;font-weight:700;color:#8079bd;letter-spacing:0.102px;">ARGUMENTAIRE COMMERCIAL</div>
<div style="position:absolute;left:1379px;top:230px;width:452px;height:161px;border:1px solid #ececec;border-top:none;background:#fff"></div>
<svg style="left:1820px;top:380px" width="11" height="11" viewBox="0 0 11 11"><path d="M1 10 L10 1 M5 10 L10 5" stroke="#6a6a6a" stroke-width="1.3"/><rect x="8" y="8" width="2" height="2" fill="#6a6a6a"/></svg>
<div style="position:absolute;left:1387px;top:235px;width:434px;height:146px;box-sizing:border-box;border:1px solid #a8a8a8;background:#fff;"></div>
<div style="position:absolute;left:1803px;top:236px;width:17px;height:144px;background:#f0f0f0"></div>
<svg style="left:1808px;top:242px" width="7" height="5" viewBox="0 0 7 5"><path d="M0 4 L3.5 0 L7 4 Z" fill="#c8c8c8"/></svg>
<svg style="left:1808px;top:370px" width="7" height="5" viewBox="0 0 7 5"><path d="M0 0 L7 0 L3.5 4 Z" fill="#c8c8c8"/></svg>
<div style="position:absolute;left:133px;top:397px;width:620px;height:16px;background:#d5d8e2"></div>
<svg style="left:137px;top:402px" width="8" height="6" viewBox="0 0 8 6"><path d="M0 5 L3.5 0 L7 5 Z" fill="#f5820a"/></svg>
<div style="position:absolute;left:156.25px;top:399.11px;white-space:pre;font-size:10.5px;line-height:10.5px;font-weight:700;color:#8079bd;letter-spacing:0.050px;">METIER</div>
<div style="position:absolute;left:133px;top:413px;width:620px;height:303px;border:1px solid #ececec;border-top:none;background:#fff"></div>
<svg style="left:742px;top:705px" width="11" height="11" viewBox="0 0 11 11"><path d="M1 10 L10 1 M5 10 L10 5" stroke="#6a6a6a" stroke-width="1.3"/><rect x="8" y="8" width="2" height="2" fill="#6a6a6a"/></svg>
<div style="position:absolute;left:134px;top:417px;width:612px;height:295px;background:#f7fbfe"></div>
<div style="position:absolute;left:137px;top:427px;width:359px;height:60px;box-sizing:border-box;border:1px solid #a8a8a8;background:transparent;"></div>
<div style="position:absolute;left:144px;top:426px;width:106px;height:3px;background:#f7fbfe"></div>
<div style="position:absolute;left:144.25px;top:420.69px;white-space:pre;-webkit-text-stroke:0.15px currentColor;font-size:11px;line-height:11px;font-weight:400;color:#000000;letter-spacing:-0.087px;">Répartition comptable</div>
<div style="position:absolute;left:144.50px;top:439.69px;white-space:pre;-webkit-text-stroke:0.15px currentColor;font-size:11px;line-height:11px;font-weight:400;color:#000000;letter-spacing:-0.225px;">2ème compte comptable</div>
<div style="position:absolute;left:275.75px;top:439.69px;white-space:pre;-webkit-text-stroke:0.15px currentColor;font-size:11px;line-height:11px;font-weight:400;color:#000000;letter-spacing:-0.229px;">% 2ème compte</div>
<div style="position:absolute;left:395.75px;top:439.69px;white-space:pre;-webkit-text-stroke:0.15px currentColor;font-size:11px;line-height:11px;font-weight:400;color:#8a8a8a;letter-spacing:-0.294px;">% compte principal</div>
<div style="position:absolute;left:146px;top:453px;width:118px;height:19px;box-sizing:border-box;border:1px solid #bcbcbc;background:#fff;"></div>
<div style="position:absolute;left:276px;top:453px;width:78px;height:19px;box-sizing:border-box;border:1px solid #bcbcbc;background:#fff;"></div>
<div style="position:absolute;left:344.75px;top:456.69px;white-space:pre;-webkit-text-stroke:0.15px currentColor;font-size:11px;line-height:11px;font-weight:400;color:#000000;">0</div>
<div style="position:absolute;left:396px;top:453px;width:78px;height:19px;box-sizing:border-box;border:1px solid #bcbcbc;background:#fff;"></div>
<div style="position:absolute;left:454.25px;top:456.69px;white-space:pre;-webkit-text-stroke:0.15px currentColor;font-size:11px;line-height:11px;font-weight:400;color:#000000;letter-spacing:-0.625px;">100</div>
<div style="position:absolute;left:507.50px;top:427.69px;white-space:pre;-webkit-text-stroke:0.15px currentColor;font-size:11px;line-height:11px;font-weight:400;color:#000000;letter-spacing:-0.239px;">Symbole de remplacement</div>
<div style="position:absolute;left:509px;top:441px;width:138px;height:19px;box-sizing:border-box;border:1px solid #bcbcbc;background:#fff;"></div>
<div style="position:absolute;left:630px;top:442px;width:16px;height:17px;background:#f0f0f0"></div>
<div style="position:absolute;left:629px;top:442px;width:1px;height:17px;background:#bcbcbc"></div>
<svg style="left:634.0px;top:448.0px" width="7" height="4" viewBox="0 0 7 4"><path d="M0 0 L7 0 L3.5 3.5 Z" fill="#8484ac"/></svg>
<div style="position:absolute;left:509px;top:471px;width:16px;height:16px;box-sizing:border-box;border:1px solid #bcbcbc;background:#fff;"></div>
<div style="position:absolute;left:527.75px;top:473.69px;white-space:pre;-webkit-text-stroke:0.15px currentColor;font-size:11px;line-height:11px;font-weight:400;color:#000000;letter-spacing:-0.068px;">Type Acompte</div>
<div style="position:absolute;left:138px;top:507px;width:177px;height:196px;box-sizing:border-box;border:1px solid #a8a8a8;background:transparent;"></div>
<div style="position:absolute;left:145px;top:506px;width:126px;height:3px;background:#f7fbfe"></div>
<div style="position:absolute;left:145.50px;top:500.69px;white-space:pre;-webkit-text-stroke:0.15px currentColor;font-size:11px;line-height:11px;font-weight:400;color:#000000;letter-spacing:-0.067px;">Coût exploitation croisière</div>
<div style="position:absolute;left:146px;top:512px;width:16px;height:16px;box-sizing:border-box;border:1px solid #bcbcbc;background:#fff;"></div>
<div style="position:absolute;left:165.25px;top:514.69px;white-space:pre;-webkit-text-stroke:0.15px currentColor;font-size:11px;line-height:11px;font-weight:400;color:#000000;letter-spacing:0.167px;">Produit de type Pax</div>
<div style="position:absolute;left:146px;top:529px;width:16px;height:16px;box-sizing:border-box;border:1px solid #bcbcbc;background:#fff;"></div>
<div style="position:absolute;left:165.25px;top:531.69px;white-space:pre;-webkit-text-stroke:0.15px currentColor;font-size:11px;line-height:11px;font-weight:400;color:#000000;letter-spacing:-0.308px;">Pax Service 1°</div>
<div style="position:absolute;left:146px;top:547px;width:16px;height:16px;box-sizing:border-box;border:1px solid #bcbcbc;background:#fff;"></div>
<div style="position:absolute;left:165.25px;top:549.69px;white-space:pre;-webkit-text-stroke:0.15px currentColor;font-size:11px;line-height:11px;font-weight:400;color:#000000;letter-spacing:0.250px;">Pax enfant</div>
<div style="position:absolute;left:146px;top:566px;width:16px;height:16px;box-sizing:border-box;border:1px solid #bcbcbc;background:#fff;"></div>
<div style="position:absolute;left:165.25px;top:568.69px;white-space:pre;-webkit-text-stroke:0.15px currentColor;font-size:11px;line-height:11px;font-weight:400;color:#000000;letter-spacing:0.667px;">Menu</div>
<div style="position:absolute;left:148.25px;top:593.69px;white-space:pre;-webkit-text-stroke:0.15px currentColor;font-size:11px;line-height:11px;font-weight:400;color:#000000;letter-spacing:-0.188px;">Blanchisserie / Pax €</div>
<div style="position:absolute;left:148.25px;top:621.69px;white-space:pre;-webkit-text-stroke:0.15px currentColor;font-size:11px;line-height:11px;font-weight:400;color:#000000;letter-spacing:-0.135px;">Plonge / Pax €</div>
<div style="position:absolute;left:148.50px;top:649.69px;white-space:pre;-webkit-text-stroke:0.15px currentColor;font-size:11px;line-height:11px;font-weight:400;color:#000000;letter-spacing:-0.136px;">Coût de base</div>
<div style="position:absolute;left:250px;top:588px;width:53px;height:19px;box-sizing:border-box;border:1px solid #bcbcbc;background:#fff;"></div>
<div style="position:absolute;left:250px;top:616px;width:53px;height:19px;box-sizing:border-box;border:1px solid #bcbcbc;background:#fff;"></div>
<div style="position:absolute;left:250px;top:644px;width:53px;height:19px;box-sizing:border-box;border:1px solid #bcbcbc;background:#fff;"></div>
<div style="position:absolute;left:323px;top:499px;width:16px;height:16px;box-sizing:border-box;border:1px solid #bcbcbc;background:#fff;"></div>
<div style="position:absolute;left:342.50px;top:501.69px;white-space:pre;-webkit-text-stroke:0.15px currentColor;font-size:11px;line-height:11px;font-weight:400;color:#000000;letter-spacing:0.472px;">Option disponible sur le web</div>
<div style="position:absolute;left:323px;top:517px;width:359px;height:109px;box-sizing:border-box;border:1px solid #a8a8a8;background:transparent;"></div>
<div style="position:absolute;left:337px;top:529px;width:16px;height:16px;box-sizing:border-box;border:1px solid #bcbcbc;background:#fff;"></div>
<div style="position:absolute;left:355.50px;top:531.69px;white-space:pre;-webkit-text-stroke:0.15px currentColor;font-size:11px;line-height:11px;font-weight:400;color:#000000;letter-spacing:-0.222px;">Croisière Promenade</div>
<div style="position:absolute;left:537px;top:529px;width:16px;height:16px;box-sizing:border-box;border:1px solid #bcbcbc;background:#fff;"></div>
<div style="position:absolute;left:555.50px;top:531.69px;white-space:pre;-webkit-text-stroke:0.15px currentColor;font-size:11px;line-height:11px;font-weight:400;color:#000000;letter-spacing:-0.229px;">Sevice Étoile</div>
<div style="position:absolute;left:337px;top:549px;width:16px;height:16px;box-sizing:border-box;border:1px solid #bcbcbc;background:#fff;"></div>
<div style="position:absolute;left:355.50px;top:551.69px;white-space:pre;-webkit-text-stroke:0.15px currentColor;font-size:11px;line-height:11px;font-weight:400;color:#000000;letter-spacing:-0.118px;">Croisière Déjeuner</div>
<div style="position:absolute;left:537px;top:549px;width:16px;height:16px;box-sizing:border-box;border:1px solid #bcbcbc;background:#fff;"></div>
<div style="position:absolute;left:555.50px;top:551.69px;white-space:pre;-webkit-text-stroke:0.15px currentColor;font-size:11px;line-height:11px;font-weight:400;color:#000000;letter-spacing:-0.385px;">Sevice Premier</div>
<div style="position:absolute;left:337px;top:569px;width:16px;height:16px;box-sizing:border-box;border:1px solid #bcbcbc;background:#fff;"></div>
<div style="position:absolute;left:355.50px;top:571.69px;white-space:pre;-webkit-text-stroke:0.15px currentColor;font-size:11px;line-height:11px;font-weight:400;color:#000000;letter-spacing:-0.232px;">Croisière Dîner</div>
<div style="position:absolute;left:537px;top:569px;width:16px;height:16px;box-sizing:border-box;border:1px solid #bcbcbc;background:#fff;"></div>
<div style="position:absolute;left:555.50px;top:571.69px;white-space:pre;-webkit-text-stroke:0.15px currentColor;font-size:11px;line-height:11px;font-weight:400;color:#000000;letter-spacing:-0.094px;">Sevice Découverte</div>
<div style="position:absolute;left:337px;top:599px;width:16px;height:16px;box-sizing:border-box;border:1px solid #bcbcbc;background:#fff;"></div>
<div style="position:absolute;left:356.25px;top:601.69px;white-space:pre;-webkit-text-stroke:0.15px currentColor;font-size:11px;line-height:11px;font-weight:400;color:#000000;letter-spacing:0.274px;">La quantité commandée doit être égale au nombre de pax</div>
<div style="position:absolute;left:341px;top:649px;width:16px;height:16px;box-sizing:border-box;border:1px solid #bcbcbc;background:#fff;"></div>
<div style="position:absolute;left:360.25px;top:651.69px;white-space:pre;-webkit-text-stroke:0.15px currentColor;font-size:11px;line-height:11px;font-weight:400;color:#000000;letter-spacing:0.250px;">Ne pas editer sur la diffusion LABO</div>
<div style="position:absolute;left:341px;top:668px;width:16px;height:16px;box-sizing:border-box;border:1px solid #bcbcbc;background:#fff;"></div>
<div style="position:absolute;left:361.00px;top:670.69px;white-space:pre;-webkit-text-stroke:0.15px currentColor;font-size:11px;line-height:11px;font-weight:400;color:#000000;letter-spacing:0.333px;">Arrondir les quantités à l'entier supérieur</div>
<div style="position:absolute;left:341px;top:687px;width:16px;height:16px;box-sizing:border-box;border:1px solid #bcbcbc;background:#fff;"></div>
<div style="position:absolute;left:360.50px;top:689.69px;white-space:pre;-webkit-text-stroke:0.15px currentColor;font-size:11px;line-height:11px;font-weight:400;color:#000000;letter-spacing:0.250px;">Compte exploitation : Boissons alcoolisées</div>
<div style="position:absolute;left:758px;top:397px;width:280px;height:16px;background:#d5d8e2"></div>
<svg style="left:762px;top:402px" width="8" height="6" viewBox="0 0 8 6"><path d="M0 5 L3.5 0 L7 5 Z" fill="#f5820a"/></svg>
<div style="position:absolute;left:782.00px;top:399.11px;white-space:pre;font-size:10.5px;line-height:10.5px;font-weight:700;color:#8079bd;letter-spacing:-0.188px;">TARIF</div>
<div style="position:absolute;left:758px;top:413px;width:280px;height:172px;border:1px solid #ececec;border-top:none;background:#fff"></div>
<svg style="left:1027px;top:574px" width="11" height="11" viewBox="0 0 11 11"><path d="M1 10 L10 1 M5 10 L10 5" stroke="#6a6a6a" stroke-width="1.3"/><rect x="8" y="8" width="2" height="2" fill="#6a6a6a"/></svg>
<div style="position:absolute;left:765.25px;top:426.69px;white-space:pre;-webkit-text-stroke:0.15px currentColor;font-size:11px;line-height:11px;font-weight:400;color:#000000;letter-spacing:-0.036px;">Prix Achat Brut</div>
<div style="position:absolute;left:884px;top:422px;width:103px;height:19px;box-sizing:border-box;border:1px solid #bcbcbc;background:#fff;"></div>
<div style="position:absolute;left:765.25px;top:450.69px;white-space:pre;-webkit-text-stroke:0.15px currentColor;font-size:11px;line-height:11px;font-weight:400;color:#000000;letter-spacing:0.045px;">Prix Revient</div>
<div style="position:absolute;left:884px;top:446px;width:103px;height:19px;box-sizing:border-box;border:1px solid #bcbcbc;background:#fff;"></div>
<div style="position:absolute;left:765.25px;top:474.69px;white-space:pre;-webkit-text-stroke:0.15px currentColor;font-size:11px;line-height:11px;font-weight:400;color:#000000;letter-spacing:-0.300px;">Prix Public</div>
<div style="position:absolute;left:884px;top:470px;width:103px;height:19px;box-sizing:border-box;border:1px solid #bcbcbc;background:#fff;"></div>
<div style="position:absolute;left:765.25px;top:498.69px;white-space:pre;-webkit-text-stroke:0.15px currentColor;font-size:11px;line-height:11px;font-weight:400;color:#f0102a;letter-spacing:-0.192px;">Prix Vente TTC</div>
<div style="position:absolute;left:884px;top:494px;width:103px;height:19px;box-sizing:border-box;border:1px solid #bcbcbc;background:#fff;"></div>
<div style="position:absolute;left:765.50px;top:522.69px;white-space:pre;-webkit-text-stroke:0.15px currentColor;font-size:11px;line-height:11px;font-weight:400;color:#000000;letter-spacing:-0.056px;">Coef Marge</div>
<div style="position:absolute;left:884px;top:518px;width:103px;height:19px;box-sizing:border-box;border:1px solid #bcbcbc;background:#fff;"></div>
<div style="position:absolute;left:765.25px;top:546.69px;white-space:pre;-webkit-text-stroke:0.15px currentColor;font-size:11px;line-height:11px;font-weight:400;color:#000000;letter-spacing:-0.188px;">Prix plancher</div>
<div style="position:absolute;left:884px;top:542px;width:103px;height:19px;box-sizing:border-box;border:1px solid #bcbcbc;background:#fff;"></div>
<div style="position:absolute;left:758px;top:589px;width:283px;height:16px;background:#d5d8e2"></div>
<svg style="left:762px;top:594px" width="8" height="6" viewBox="0 0 8 6"><path d="M0 5 L3.5 0 L7 5 Z" fill="#f5820a"/></svg>
<div style="position:absolute;left:781.75px;top:591.11px;white-space:pre;font-size:10.5px;line-height:10.5px;font-weight:700;color:#8079bd;letter-spacing:0.068px;">SEGMENTATION</div>
<div style="position:absolute;left:758px;top:605px;width:283px;height:111px;border:1px solid #ececec;border-top:none;background:#fff"></div>
<svg style="left:1030px;top:705px" width="11" height="11" viewBox="0 0 11 11"><path d="M1 10 L10 1 M5 10 L10 5" stroke="#6a6a6a" stroke-width="1.3"/><rect x="8" y="8" width="2" height="2" fill="#6a6a6a"/></svg>
<div style="position:absolute;left:765.50px;top:618.69px;white-space:pre;-webkit-text-stroke:0.15px currentColor;font-size:11px;line-height:11px;font-weight:400;color:#000000;letter-spacing:0.042px;">Statistique 1</div>
<div style="position:absolute;left:869px;top:614px;width:162px;height:19px;box-sizing:border-box;border:1px solid #bcbcbc;background:#fff;"></div>
<div style="position:absolute;left:1014px;top:615px;width:16px;height:17px;background:#f0f0f0"></div>
<div style="position:absolute;left:1013px;top:615px;width:1px;height:17px;background:#bcbcbc"></div>
<svg style="left:1018.0px;top:621.0px" width="7" height="4" viewBox="0 0 7 4"><path d="M0 0 L7 0 L3.5 3.5 Z" fill="#8484ac"/></svg>
<div style="position:absolute;left:765.50px;top:642.69px;white-space:pre;-webkit-text-stroke:0.15px currentColor;font-size:11px;line-height:11px;font-weight:400;color:#000000;letter-spacing:0.042px;">Statistique 2</div>
<div style="position:absolute;left:869px;top:638px;width:162px;height:19px;box-sizing:border-box;border:1px solid #bcbcbc;background:#fff;"></div>
<div style="position:absolute;left:1014px;top:639px;width:16px;height:17px;background:#f0f0f0"></div>
<div style="position:absolute;left:1013px;top:639px;width:1px;height:17px;background:#bcbcbc"></div>
<svg style="left:1018.0px;top:645.0px" width="7" height="4" viewBox="0 0 7 4"><path d="M0 0 L7 0 L3.5 3.5 Z" fill="#8484ac"/></svg>
<div style="position:absolute;left:765.50px;top:666.69px;white-space:pre;-webkit-text-stroke:0.15px currentColor;font-size:11px;line-height:11px;font-weight:400;color:#000000;letter-spacing:0.042px;">Statistique 3</div>
<div style="position:absolute;left:869px;top:662px;width:162px;height:19px;box-sizing:border-box;border:1px solid #bcbcbc;background:#fff;"></div>
<div style="position:absolute;left:1014px;top:663px;width:16px;height:17px;background:#f0f0f0"></div>
<div style="position:absolute;left:1013px;top:663px;width:1px;height:17px;background:#bcbcbc"></div>
<svg style="left:1018.0px;top:669.0px" width="7" height="4" viewBox="0 0 7 4"><path d="M0 0 L7 0 L3.5 3.5 Z" fill="#8484ac"/></svg>
<div style="position:absolute;left:765.50px;top:690.69px;white-space:pre;-webkit-text-stroke:0.15px currentColor;font-size:11px;line-height:11px;font-weight:400;color:#000000;letter-spacing:0.021px;">Statistique 4</div>
<div style="position:absolute;left:869px;top:686px;width:162px;height:19px;box-sizing:border-box;border:1px solid #bcbcbc;background:#fff;"></div>
<div style="position:absolute;left:1014px;top:687px;width:16px;height:17px;background:#f0f0f0"></div>
<div style="position:absolute;left:1013px;top:687px;width:1px;height:17px;background:#bcbcbc"></div>
<svg style="left:1018.0px;top:693.0px" width="7" height="4" viewBox="0 0 7 4"><path d="M0 0 L7 0 L3.5 3.5 Z" fill="#8484ac"/></svg>
<div style="position:absolute;left:1043px;top:397px;width:290px;height:16px;background:#d5d8e2"></div>
<svg style="left:1047px;top:402px" width="8" height="6" viewBox="0 0 8 6"><path d="M0 5 L3.5 0 L7 5 Z" fill="#f5820a"/></svg>
<div style="position:absolute;left:1066.25px;top:399.11px;white-space:pre;font-size:10.5px;line-height:10.5px;font-weight:700;color:#8079bd;letter-spacing:-0.833px;">RECETTE</div>
<div style="position:absolute;left:1043px;top:413px;width:290px;height:303px;border:1px solid #ececec;border-top:none;background:#fff"></div>
<svg style="left:1322px;top:705px" width="11" height="11" viewBox="0 0 11 11"><path d="M1 10 L10 1 M5 10 L10 5" stroke="#6a6a6a" stroke-width="1.3"/><rect x="8" y="8" width="2" height="2" fill="#6a6a6a"/></svg>
<div style="position:absolute;left:1054px;top:422px;width:16px;height:16px;box-sizing:border-box;border:1px solid #bcbcbc;background:#fff;"></div>
<div style="position:absolute;left:1073.25px;top:424.69px;white-space:pre;-webkit-text-stroke:0.15px currentColor;font-size:11px;line-height:11px;font-weight:400;color:#000000;letter-spacing:0.347px;">Recette non définie</div>
<div style="position:absolute;left:1053px;top:443px;width:265px;height:23px;background:#ffff00"></div>
<div style="position:absolute;left:1053.50px;top:450.69px;white-space:pre;-webkit-text-stroke:0.15px currentColor;font-size:11px;line-height:11px;font-weight:400;color:#000000;letter-spacing:0.104px;">Qté.Référence</div>
<div style="position:absolute;left:1155px;top:445px;width:26px;height:19px;box-sizing:border-box;border:1px solid #b4b450;background:#ffff00;"></div>
<div style="position:absolute;left:1172.25px;top:448.69px;white-space:pre;-webkit-text-stroke:0.15px currentColor;font-size:11px;line-height:11px;font-weight:400;color:#000000;">1</div>
<div style="position:absolute;left:1184px;top:445px;width:133px;height:19px;box-sizing:border-box;border:1px solid #b4b450;background:#ffff00;"></div>
<div style="position:absolute;left:1299px;top:446px;width:17px;height:17px;background:#e6e600"></div>
<div style="position:absolute;left:1298px;top:446px;width:1px;height:17px;background:#b4b450"></div>
<svg style="left:1303.5px;top:452.0px" width="7" height="4" viewBox="0 0 7 4"><path d="M0 0 L7 0 L3.5 3.5 Z" fill="#8a8a3a"/></svg>
<div style="position:absolute;left:1185.25px;top:448.69px;white-space:pre;-webkit-text-stroke:0.15px currentColor;font-size:11px;line-height:11px;font-weight:400;color:#000000;">Kg</div>
<div style="position:absolute;left:1053.75px;top:474.69px;white-space:pre;-webkit-text-stroke:0.15px currentColor;font-size:11px;line-height:11px;font-weight:400;color:#000000;letter-spacing:-0.111px;">Tps recette (H num)</div>
<div style="position:absolute;left:1155px;top:469px;width:162px;height:19px;box-sizing:border-box;border:1px solid #bcbcbc;background:#fff;"></div>
<div style="position:absolute;left:1291.75px;top:472.69px;white-space:pre;-webkit-text-stroke:0.15px currentColor;font-size:11px;line-height:11px;font-weight:400;color:#000000;letter-spacing:0.417px;">0,15</div>
<div style="position:absolute;left:1053.50px;top:498.69px;white-space:pre;-webkit-text-stroke:0.15px currentColor;font-size:11px;line-height:11px;font-weight:400;color:#000000;letter-spacing:-0.036px;">Coût production</div>
<div style="position:absolute;left:1155px;top:493px;width:100px;height:19px;box-sizing:border-box;border:1px solid #bcbcbc;background:#fff;"></div>
<div style="position:absolute;left:1236.50px;top:496.69px;white-space:pre;-webkit-text-stroke:0.15px currentColor;font-size:11px;line-height:11px;font-weight:400;color:#000000;letter-spacing:0.375px;">3,3</div>
<div style="position:absolute;left:1063.50px;top:523.69px;white-space:pre;-webkit-text-stroke:0.15px currentColor;font-size:11px;line-height:11px;font-weight:400;color:#000000;letter-spacing:-0.091px;">Coût matière</div>
<div style="position:absolute;left:1155px;top:517px;width:162px;height:19px;box-sizing:border-box;border:1px solid #bcbcbc;background:#fff;"></div>
<div style="position:absolute;left:1285.50px;top:520.69px;white-space:pre;-webkit-text-stroke:0.15px currentColor;font-size:11px;line-height:11px;font-weight:400;color:#000000;letter-spacing:0.125px;">8,049</div>
<div style="position:absolute;left:1076.25px;top:544.69px;white-space:pre;-webkit-text-stroke:0.15px currentColor;font-size:11px;line-height:11px;font-weight:400;color:#000000;letter-spacing:-0.250px;">Prime cost</div>
<div style="position:absolute;left:1155px;top:541px;width:162px;height:19px;box-sizing:border-box;border:1px solid #bcbcbc;background:#fff;"></div>
<div style="position:absolute;left:1280.25px;top:544.69px;white-space:pre;-webkit-text-stroke:0.15px currentColor;font-size:11px;line-height:11px;font-weight:400;color:#000000;letter-spacing:0.300px;">11,349</div>
<div style="position:absolute;left:1054.00px;top:571.69px;white-space:pre;-webkit-text-stroke:0.15px currentColor;font-size:11px;line-height:11px;font-weight:400;color:#000000;letter-spacing:-0.250px;">Actualisé le</div>
<div style="position:absolute;left:1126px;top:567px;width:107px;height:19px;box-sizing:border-box;border:1px solid #bcbcbc;background:#fff;"></div>
<div style="position:absolute;left:1127.50px;top:570.69px;white-space:pre;-webkit-text-stroke:0.15px currentColor;font-size:11px;line-height:11px;font-weight:400;color:#000000;letter-spacing:0.208px;">25/01/2024 11:36:41</div>
<div style="position:absolute;left:1235px;top:566px;width:21px;height:21px;box-sizing:border-box;border:1px solid #bcbcbc;background:#f0f0f0;"></div>
<svg style="left:1239px;top:569px" width="14" height="15" viewBox="0 0 14 15"><rect x="0.7" y="1.7" width="11.6" height="11.6" rx="1" fill="#fff" stroke="#2a3a90" stroke-width="1.3"/><rect x="0.7" y="1.2" width="11.6" height="2.3" fill="#3a5ac0"/><text x="6.5" y="11.6" font-size="7" font-family="Liberation Sans" font-weight="700" text-anchor="middle" fill="#111">14</text></svg>
<div style="position:absolute;left:1050px;top:594px;width:16px;height:16px;box-sizing:border-box;border:1px solid #bcbcbc;background:#fff;"></div>
<svg style="left:1052px;top:597px" width="12" height="10" viewBox="0 0 12 10"><path d="M2 5 L5 8.5 L10.5 1.5" stroke="#8a8ab4" stroke-width="1.1" fill="none"/></svg>
<div style="position:absolute;left:1069.50px;top:596.69px;white-space:pre;-webkit-text-stroke:0.15px currentColor;font-size:11px;line-height:11px;font-weight:400;color:#000000;letter-spacing:0.023px;">Sous recette</div>
<div style="position:absolute;left:1157.50px;top:596.69px;white-space:pre;-webkit-text-stroke:0.15px currentColor;font-size:11px;line-height:11px;font-weight:400;color:#000000;letter-spacing:0.350px;">Statut</div>
<div style="position:absolute;left:1196px;top:593px;width:60px;height:19px;box-sizing:border-box;border:1px solid #bcbcbc;background:#fff;"></div>
<div style="position:absolute;left:1239px;top:594px;width:16px;height:17px;background:#f0f0f0"></div>
<div style="position:absolute;left:1238px;top:594px;width:1px;height:17px;background:#bcbcbc"></div>
<svg style="left:1243.0px;top:600.0px" width="7" height="4" viewBox="0 0 7 4"><path d="M0 0 L7 0 L3.5 3.5 Z" fill="#8484ac"/></svg>
<div style="position:absolute;left:1198.00px;top:596.69px;white-space:pre;-webkit-text-stroke:0.15px currentColor;font-size:11px;line-height:11px;font-weight:400;color:#000000;letter-spacing:-0.250px;">Validé</div>
<div style="position:absolute;left:1337px;top:396px;width:497px;height:16px;background:#d5d8e2"></div>
<svg style="left:1341px;top:401px" width="8" height="6" viewBox="0 0 8 6"><path d="M0 5 L3.5 0 L7 5 Z" fill="#f5820a"/></svg>
<div style="position:absolute;left:1360.75px;top:398.11px;white-space:pre;font-size:10.5px;line-height:10.5px;font-weight:700;color:#8079bd;letter-spacing:0.091px;">COMMENTAIRES</div>
<div style="position:absolute;left:1337px;top:412px;width:497px;height:309px;border:1px solid #ececec;border-top:none;background:#fff"></div>
<svg style="left:1823px;top:710px" width="11" height="11" viewBox="0 0 11 11"><path d="M1 10 L10 1 M5 10 L10 5" stroke="#6a6a6a" stroke-width="1.3"/><rect x="8" y="8" width="2" height="2" fill="#6a6a6a"/></svg>
<div style="position:absolute;left:1341px;top:418px;width:486px;height:296px;box-sizing:border-box;border:1px solid #a8a8a8;background:#fff;"></div>
</body></html>
